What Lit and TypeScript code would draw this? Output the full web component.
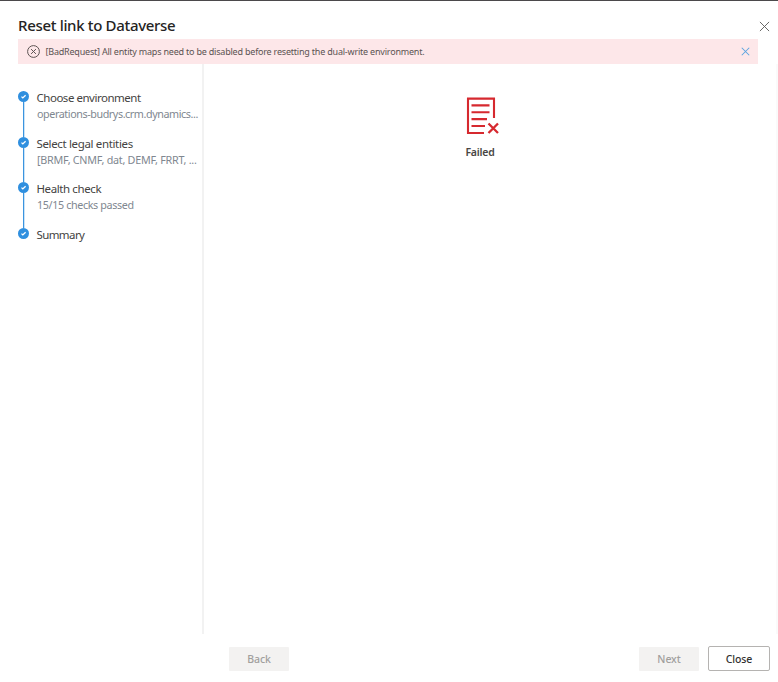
import { LitElement, html, css, svg } from "lit";
import { customElement } from "lit/decorators.js";

interface Step {
  title: string;
  detail: string;
  titleSpacing: number;
  detailSpacing: number;
}

const steps: Step[] = [
  { title: "Choose environment", detail: "operations-budrys.crm.dynamics...", titleSpacing: -0.48, detailSpacing: -0.42 },
  { title: "Select legal entities", detail: "[BRMF, CNMF, dat, DEMF, FRRT, ...", titleSpacing: -0.35, detailSpacing: -0.25 },
  { title: "Health check", detail: "15/15 checks passed", titleSpacing: -0.4, detailSpacing: -0.37 },
  { title: "Summary", detail: "", titleSpacing: -0.6, detailSpacing: 0 },
];

const cross = svg`<path d="M1 1L11 11M11 1L1 11" />`;

@customElement("app-root")
export class AppRoot extends LitElement {
  static styles = css`
    :host {
      display: flex;
      flex-direction: column;
      box-sizing: border-box;
      width: 778px;
      height: 682px;
      border-top: 1px solid #4b494b;
      background: #fff;
      color: #323130;
      font-family: "Noto Sans", "Open Sans", sans-serif;
      overflow: hidden;
      white-space: nowrap;
    }
    svg {
      display: block;
      fill: none;
      flex: none;
    }
    .header {
      display: flex;
      justify-content: space-between;
      height: 38px;
      box-sizing: border-box;
      padding: 13px 8px 0 18px;
    }
    .heading {
      margin: 0;
      font-size: 15px;
      line-height: 22px;
      font-weight: 500;
      letter-spacing: -0.33px;
      color: #252423;
    }
    .dismiss {
      width: 11px;
      height: 11px;
      margin-top: 7px;
      stroke: #5c5b5a;
      stroke-width: 1;
    }
    .banner {
      display: flex;
      align-items: center;
      height: 25px;
      box-sizing: border-box;
      margin: 0 20px 0 18px;
      padding: 0 8px 0 9px;
      background: #fde7e9;
      color: #5b5352;
    }
    .banner-icon {
      width: 13px;
      height: 13px;
      stroke: #5b5352;
    }
    .banner-text {
      flex: 1;
      margin-left: 5.5px;
      font-size: 9px;
      letter-spacing: -0.205px;
    }
    .banner-close {
      width: 9px;
      height: 9px;
      stroke: #5ba4e0;
      stroke-width: 1.4;
    }
    .body {
      display: flex;
      height: 570px;
    }
    .steps {
      width: 204px;
      flex: none;
      box-sizing: border-box;
      border-right: 2px solid #f2f2f2;
      padding: 27px 0 0 18px;
    }
    .step {
      display: flex;
      height: 45.6px;
    }
    .rail {
      display: flex;
      flex-direction: column;
      align-items: center;
      width: 11px;
    }
    .badge {
      width: 11px;
      height: 11px;
    }
    .line {
      flex: 1;
      width: 1px;
      background: #3a94df;
      box-shadow: 1px 0 #2f8fdf40;
    }
    .labels {
      margin-left: 7.5px;
      margin-top: -2px;
    }
    .label {
      font-size: 11.5px;
      line-height: 17px;
      color: #444342;
    }
    .detail {
      margin-left: 0.5px;
      font-size: 10.75px;
      line-height: 16.8px;
      color: #808790;
    }
    .result {
      flex: 1;
      display: flex;
      flex-direction: column;
      align-items: center;
      box-sizing: border-box;
      padding: 33px 20px 0 0;
      border-right: 2px solid #fafafa;
    }
    .document {
      width: 33px;
      height: 38px;
      margin-left: 4px;
    }
    .status {
      margin-top: 8.5px;
      font-size: 10.5px;
      line-height: 16px;
      font-weight: 600;
      letter-spacing: -0.2px;
      color: #484644;
    }
    .footer {
      display: flex;
      align-items: center;
      padding: 12px 8px 0 229px;
    }
    .button {
      display: flex;
      align-items: center;
      justify-content: center;
      box-sizing: border-box;
      width: 60px;
      height: 24px;
      padding: 0;
      border: 0;
      border-radius: 1px;
      background: #f3f2f1;
      color: #a19f9d;
      font: 500 10.5px "Noto Sans", "Open Sans", sans-serif;
      letter-spacing: -0.1px;
    }
    .next {
      margin-left: auto;
    }
    .close {
      width: 62px;
      height: 25px;
      margin-left: 9px;
      border: 1px solid #b5b3b1;
      border-radius: 2px;
      background: #fff;
      color: #323130;
    }
  `;

  private renderStep(step: Step, last: boolean) {
    return html`
      <div class="step">
        <div class="rail">
          <svg class="badge" viewBox="0 0 11 11">
            <circle cx="5.5" cy="5.5" r="5.5" fill="#2f8fdf" />
            <path d="M3.5 5.6L4.8 6.9L7.6 4.2" stroke="#fff" stroke-width="1.3" />
          </svg>
          ${last ? null : html`<div class="line"></div>`}
        </div>
        <div class="labels">
          <div class="label" style="letter-spacing:${step.titleSpacing}px">${step.title}</div>
          <div class="detail" style="letter-spacing:${step.detailSpacing}px">${step.detail}</div>
        </div>
      </div>
    `;
  }

  render() {
    return html`
      <div class="header">
        <h1 class="heading">Reset link to Dataverse</h1>
        <svg class="dismiss" viewBox="0 0 12 12">${cross}</svg>
      </div>
      <div class="banner">
        <svg class="banner-icon" viewBox="0 0 13 13">
          <circle cx="6.5" cy="6.5" r="5.9" />
          <path d="M4.1 4.1L8.9 8.9M8.9 4.1L4.1 8.9" />
        </svg>
        <span class="banner-text">[BadRequest] All entity maps need to be disabled before resetting the dual-write environment.</span>
        <svg class="banner-close" viewBox="0 0 12 12">${cross}</svg>
      </div>
      <div class="body">
        <div class="steps">${steps.map((s, i) => this.renderStep(s, i === steps.length - 1))}</div>
        <div class="result">
          <svg class="document" viewBox="0 0 33 38" stroke="#d6292f" stroke-width="2.1">
            <path d="M18 36H2V1.6H28V21" />
            <path d="M5.5 8.4H23.5M5.5 15.3H23.5M5.5 22.1H21M5.5 29H19" />
            <path d="M22.5 26.5L32 36M32 26.5L22.5 36" stroke-width="2.3" />
          </svg>
          <div class="status">Failed</div>
        </div>
      </div>
      <div class="footer">
        <button class="button">Back</button>
        <button class="button next">Next</button>
        <button class="button close">Close</button>
      </div>
    `;
  }
}
